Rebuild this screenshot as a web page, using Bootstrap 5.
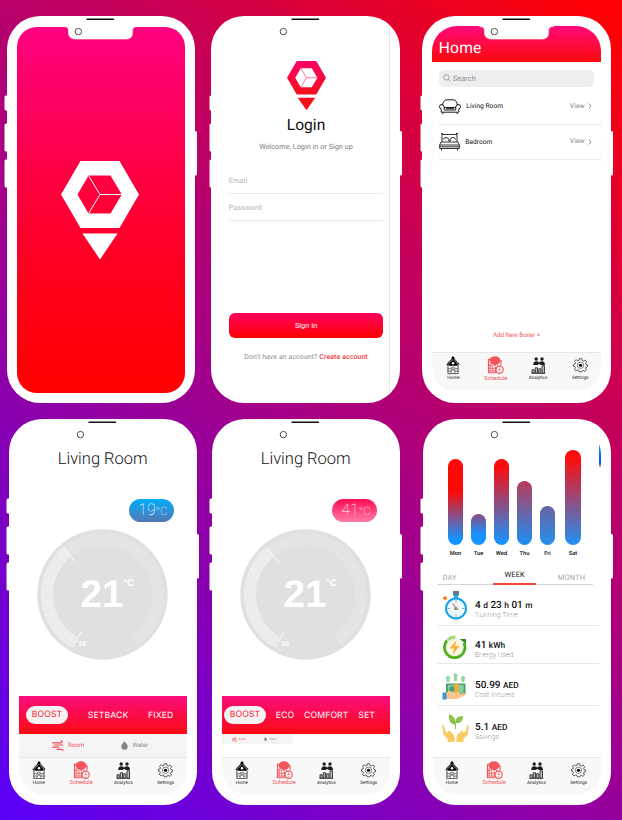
<!DOCTYPE html>
<html lang="en">
<head>
<meta charset="utf-8">
<meta name="viewport" content="width=device-width, initial-scale=1">
<title>Smart Boiler</title>
<link rel="stylesheet" href="https://cdn.jsdelivr.net/npm/bootstrap@5.3.0/dist/css/bootstrap.min.css">
<style>
html,body{height:820px;overflow:hidden}
body{width:622px;font-family:Roboto,"Liberation Sans",sans-serif;color:#222;line-height:1;text-rendering:geometricPrecision;
  background:linear-gradient(40deg,#5800f8 0%,#98009a 40%,#c80055 70%,#fd0003 98%);white-space:nowrap}
svg{display:block;flex:none}
.defs{width:0;height:0}
/* device */
.line-one{padding:16px 0 0 6.800px;height:418.5px}
.line-two{padding-left:8.5px}
.line-one .phone:nth-child(2){margin-left:16px}
.line-two .phone:nth-child(2){margin-left:14.5px}
.phone:nth-child(3){margin-left:22.5px}
.phone{width:188.5px;height:386.5px;border-radius:33px;background:#fff;padding:10px;flex:none}
.device{left:-2.5px;top:0;width:194px;height:387px;pointer-events:none}
.screen{width:168.5px;height:366px;border-radius:25px;overflow:hidden;box-shadow:inset 0 0 0 1px #fffdf2}
.splash{background:linear-gradient(#ff0080,#ff0040 42%,#ff001c 70%,#f00);height:366px;margin-top:1px;box-shadow:none;border-radius:20px}
.splash svg{margin-top:133.5px;margin-left:-3px}
/* login */
.login{padding:35px 6.5px 0 7.5px}
.login-edge{box-shadow:inset -1px 0 0 #e9e9ec;border-radius:25px 0 0 25px}
.login h1{font-size:15.6px;font-weight:400;margin:5.500px 0 0;line-height:18px;color:#111}
.login .welcome{font-size:7.3px;line-height:10px;margin-top:7.500px;color:#7f7f84}
.login .fields{margin-top:15px}
.field{border-bottom:1px solid #e9e9ea;font-size:7.3px;color:#b4b4b8;height:27px;line-height:28px;letter-spacing:.1px}
.sign{height:25.5px;border-radius:6px;background:linear-gradient(#ff0060,#f00);color:#fff;font-size:7.4px;line-height:25px;padding:0;border:0;margin-top:92px}
.account{font-size:6.9px;margin-top:16px;color:#8c8c90;letter-spacing:.12px}
.account b{font-weight:500;color:#ee3a3a}
/* home */
.top-title{height:36px;background:linear-gradient(#ff0a7c,#fb0a0a);color:#fff;font-size:15.6px;padding:13px 0 0 6.5px;line-height:19px;letter-spacing:.2px}
.search{margin:8px 7px 0 6.5px;height:16.5px;border-radius:5px;background:#eeeef0;color:#929296;font-size:7.5px;padding-left:4px;gap:2px}
.room{margin-left:6.5px;height:35.2px;border-bottom:1px solid #ececee;font-size:6.7px;color:#111;padding-right:8.5px}
.room.first{height:38.3px;padding-top:3px}
.room .name{margin-left:5.500px}
.room .view{color:#85858a;font-size:6.8px;letter-spacing:.1px;gap:3.500px}
.room .view svg{margin-top:-.5px}
.boiler{font-size:6.2px;color:#ee5558;margin-bottom:13.500px}
.home-tabs{padding-bottom:2px}
.tabs-bar{height:38px;background:#f8f8f9;border-top:1px solid #e7e7ea;flex:none;width:168.5px}
.tabs-bar>div{width:42.3px;padding-top:3px;font-size:4.6px;color:#222;text-align:center;flex:none}
.tabs-bar svg{margin:0 auto 2.800px}
.tabs-bar .on{color:#f0565a;font-size:5.7px}
.tabs-bar .on svg{margin-bottom:2px}
.line-two .tabs-bar>div{position:relative;left:-.8px}
#usage .tabs-bar>div{left:-1.8px}
/* thermostat */
.room-title{font-size:16.5px;font-weight:300;margin:21px 0 0;line-height:20px;color:#111}
.target{width:45px;height:22.5px;border-radius:12px;margin:29.5px 13px 0 auto;font-weight:100;font-size:16px;line-height:22.500px;color:#fff;text-align:center;padding-left:3px}
.target small{font-size:11.5px}
.cool{background:linear-gradient(#02acfb,#5478b4)}
.hot{background:linear-gradient(#ff0a55,#ff7ba6)}
.dial{margin:7.3px auto 0}
.modes{height:38.700px;background:linear-gradient(#fb0d7c,#fb0b12);color:#fff;font-family:Inter,sans-serif;font-size:8.7px;letter-spacing:.1px;flex:none;padding:0 13.500px 0 7.500px}
.modes.four{padding:0 15px 0 2.500px}
.modes span:not(.mode-on){padding-top:2px}
.mode-on{width:42px;height:17.5px;border-radius:9px;background:#f4f2f3;color:#f22a38;line-height:19px;text-align:center}
.source{height:22.3px;background:#f4f4f5;font-size:6.2px;color:#8e8e92;flex:none;padding:0 20px 0 15px}
.source .on{color:#ee5558}
.source.tiny{height:10px;width:71.5px;font-size:2.8px;padding:0 7px 0 1px}
.source.tiny span{gap:2px}
.tiny-slot{height:22.3px;flex:none}
/* usage */
.chart{padding-left:15px;height:129.500px;flex:none}
.bar-col{width:16px;margin-right:7px;font-size:5.8px;font-weight:500;color:#111}
.bar-col:last-child{margin-left:2.500px}
.bar-col i{display:block;width:15.7px;border-radius:8px;margin-bottom:7px}
.period{width:156.5px;margin:10px 0 0 4px;height:17px;border-bottom:1px solid #d5d5d8;font-size:7.5px;color:#a8a8ac;letter-spacing:.1px;flex:none}
.period span{width:43px;padding-top:5.5px}
.period span:first-child{padding-left:6px}
.period .on{color:#111;height:17px;padding-top:3px;border-bottom:2px solid #fa4437}
.stat{margin:0 2px 0 4px;border-bottom:1px solid #e8e8ea;font-size:10px;font-weight:500;color:#111;flex:none}
.stat svg{margin:2px 3.500px 0 2px}
.stat .figure{padding-top:11px}
.stat small{font-size:8.4px;font-weight:500}
.stat em{display:block;font-style:normal;font-weight:100;font-size:7.1px;color:#111;line-height:8px}
.peek{right:0;top:13px;width:2px;height:25px;background:linear-gradient(#1c9bff,#0050ff 85%,#e8c060)}
</style>
<script src="https://cdn.jsdelivr.net/npm/bootstrap@5.3.0/dist/js/bootstrap.bundle.min.js"></script>
</head>
<body>
<svg class="defs position-absolute" aria-hidden="true">
  <defs>
    <linearGradient id="brand" x1="0" y1="0" x2="0" y2="1"><stop offset="0" stop-color="#ff0066"/><stop offset="1" stop-color="#f4101c"/></linearGradient>
    <symbol id="device" viewBox="-2.5 0 194 387">
      <path fill="#fff" d="M57 10.5q5 0 5 4v2q0 6.500 7 6.500h51q6 0 6-6.500v-2q0-4 5-4V8H57z"/>
      <path fill="none" stroke="#fffbe9" stroke-width=".7" d="M57 10.500q5 0 5 4v2q0 6.500 7 6.500h51q6 0 6-6.500v-2q0-4 5-4"/>
      <path stroke="#111" stroke-width="1.4" stroke-linecap="round" d="M80.500 3.200h26.500"/>
      <circle cx="71.900" cy="15.600" r="3.200" fill="#fff" stroke="#222" stroke-width=".8"/>
      <path fill="#fffef8" d="M1 79.500h-1.500q-1.500 0-1.500 1.500v12q0 1.500 1.500 1.500H1zM1 107.500h-1.500q-1.500 0-1.500 1.500v25q0 1.500 1.500 1.500H1zM1 143.500h-1.500q-1.500 0-1.500 1.500v25q0 1.500 1.500 1.500H1zM188 115h1q1.500 0 1.500 1.500v41.500q0 1.500-1.500 1.500h-1z"/>
    </symbol>
    <symbol id="logo" viewBox="0 0 78 99">
      <path fill-rule="evenodd" d="M0 33.500 19.500 0h39L78 33.500 58.500 67h-39zM16.500 33.500l11 19h22l11.300-19-11.300-19h-22z"/>
      <path d="M21.500 72.500h35L39 98.500z"/>
      <path d="M27.500 14.500 39 33.500h22M39 33.500l-11.500 19" fill="none" stroke="currentColor"/>
    </symbol>
    <symbol id="i-home" viewBox="0 0 14 19">
      <path d="M.8 9 7 2.200 13.200 9" fill="none" stroke="#1d1d1f" stroke-width="1.700" stroke-dasharray="1.300 .35"/>
      <circle cx="7" cy="2" r="1.500"/><path d="M2.500 8.500 7 3.500l4.500 5V10h-9z"/>
      <path d="M1.800 9.300v8.900h10.400V9.300" fill="none" stroke="#1d1d1f" stroke-width=".8"/>
      <circle cx="7" cy="7.500" r="1.300" fill="#fff"/>
      <path d="M5 18v-5.500l2-1.300 2 1.300V18M5 12l4 4M9 12l-4 4M2 13h2.200M9.800 13H12M2 15.500h2.200M9.800 15.500H12" fill="none" stroke="#1d1d1f" stroke-width=".6"/>
    </symbol>
    <symbol id="i-schedule" viewBox="0 0 17 18">
      <path d="M3 3H1.500v13.500h8M13 4.500h1V9" fill="none" stroke="#f0565a" stroke-width="1.200"/>
      <path d="M3.200 7v8M5.800 9.500V15M2 9h4M2 12h7M2 14.800h7M8.500 10.500v5M10.500 8.500v2" stroke="#f0565a" stroke-width=".9"/>
      <ellipse cx="8" cy="4.300" rx="5.500" ry="4.200" fill="#f0565a"/><path d="m6 7.500 2 2.500 2.500-2.500z" fill="#f0565a"/>
      <circle cx="12.600" cy="13.500" r="3.600" fill="#fff" stroke="#f0565a" stroke-width="1.200"/>
      <path d="M12.600 11.300v2.300h1.800M10.800 13.600h.8M12.600 15v.8" fill="none" stroke="#f0565a" stroke-width=".8"/>
    </symbol>
    <symbol id="i-analytics" viewBox="0 0 15 18" fill="#1d1d1f">
      <circle cx="5.200" cy="2.800" r="1.700"/><circle cx="11" cy="2.800" r="1.700"/>
      <path d="M2.200 8.800q0-3.800 3-3.800t2.900 2q0-2 2.900-2t3 3.800H10l-1.800-1-1.700 1z"/>
      <path d="M1 13.500h2.200V17H1zM4.300 11.500h2.200V17H4.300zM7.700 12.500h2.200V17H7.700zM11 9.500h2.500V17H11z" fill="#bbb" stroke="#1d1d1f" stroke-width=".8"/>
      <path d="M.3 17.100h14" stroke="#1d1d1f" stroke-width=".6"/>
    </symbol>
    <symbol id="i-settings" viewBox="0 0 16 16">
      <path fill="none" stroke="#2a2a2c" stroke-width=".8" d="M6.700 1h2.600l.4 2 1.300.6 1.800-1.200 1.800 1.800L13.400 6l.5 1.300 1.600.3v1.900l-1.700.5-.5 1.200 1.100 1.700-1.700 1.700-1.800-1.100-1.200.5L9.300 15H6.700l-.4-1.500-1.300-.5-1.800 1.100-1.800-1.700 1.200-1.800L2.100 9.400.5 9V7l1.700-.4.500-1.200L1.500 3.800l1.800-1.700 1.800 1.200L6.300 3z"/>
      <circle cx="8" cy="8" r="3.400" fill="none" stroke="#2a2a2c" stroke-width=".6"/><circle cx="8" cy="8" r="1.700" fill="#000"/>
    </symbol>
    <symbol id="i-wind" viewBox="0 0 12 11">
      <path fill="none" stroke="#ee4c50" stroke-width="1.200" stroke-linecap="round" d="M.6 2.800h8.300q1.200 0 1.200-1T9 .8M2.200 5h8.300M.6 7.200h6M5 9.400h4.500q1.500 0 1.500.9"/>
    </symbol>
    <symbol id="i-drop" viewBox="0 0 7 9"><path fill="#838386" d="M3.500.3q3.200 3.600 3.200 5.200a3.100 3.100 0 0 1-6.400 0Q.3 3.900 3.500.3z"/></symbol>
    <symbol id="dial" viewBox="-65.500 -65.500 131 131">
      <circle r="65.200" fill="#e0e0e0"/>
      <path d="M-29 47.500A55.500 55.500 0 1 1 32 45.500" fill="none" stroke="#e9e9e9" stroke-width="12" stroke-dasharray=".8 1"/>
      <path d="M-29 47.500A55.500 55.500 0 0 1-35-43" fill="none" stroke="#f4f4f4" stroke-width="12" stroke-dasharray="1 .8"/>
      <path d="m-38.500-46.500 11.500 14M-30 52.500l8.500-15" stroke="#fff" stroke-width=".9"/>
      <text x="-22" y="12.300" font-family="Liberation Sans,sans-serif" font-weight="700" font-size="38.500" fill="#fff">21</text>
      <text x="20.800" y="-8.300" font-family="Liberation Sans,sans-serif" font-weight="700" font-size="9.500" fill="#fff">°C</text>
      <text x="-24.300" y="51" font-family="Liberation Sans,sans-serif" font-weight="700" font-size="6.800" fill="#fff">10</text>
    </symbol>
  </defs>
</svg>

<div class="line-one d-flex">
  <!-- Splash -->
  <section class="phone position-relative">
    <div class="screen splash d-flex justify-content-center">
      <svg width="78" height="99" fill="#fff" color="#fff"><use href="#logo"/></svg>
    </div>
    <svg class="device position-absolute"><use href="#device"/></svg>
  </section>

  <!-- Login -->
  <section class="phone position-relative">
    <div class="screen login login-edge text-center">
      <svg class="mx-auto" width="39" height="49.500" viewBox="0 0 78 99" fill="url(#brand)" color="#ff5580">
        <path fill-rule="evenodd" d="M0 33.500 19.500 0h39L78 33.500 58.500 67h-39zM16.500 33.500l11 19h22l11.300-19-11.300-19h-22z"/>
        <path fill="#f9101c" d="M21.500 73.500h35L39 98.500z"/>
        <path d="M27.500 14.500 39 33.500h22M39 33.500l-11.500 19" fill="none" stroke="currentColor" stroke-width="1.600"/>
      </svg>
      <h1>Login</h1>
      <div class="welcome">Welcome, Login in or Sign up</div>
      <div class="text-start fields">
        <div class="field">Email</div>
        <div class="field">Password</div>
      </div>
      <button class="btn sign w-100 d-block">Sign In</button>
      <div class="account">Don't have an account? <b>Create account</b></div>
    </div>
    <svg class="device position-absolute"><use href="#device"/></svg>
  </section>

  <!-- Rooms -->
  <section class="phone position-relative">
    <div class="screen d-flex flex-column">
      <div class="top-title">Home</div>
      <div class="search d-flex align-items-center">
        <svg width="8" height="8" viewBox="0 0 8 8" fill="none" stroke="#8a8a8e" stroke-width=".8"><circle cx="3.400" cy="3.400" r="2.700"/><path d="m5.400 5.400 2 2"/></svg>Search
      </div>
      <div class="room first d-flex align-items-center">
        <svg width="22" height="16" viewBox="0 0 22 16" fill="none" stroke="#1c1c1e" stroke-width="1"><path d="M3.500 6.500Q4 1 8 .8h6q4 .2 4.500 5.700M3.500 5.500Q.5 5 .5 7.800q0 1.700 1.700 2v3.400h17.600V9.800q1.700-.3 1.700-2 0-2.800-3-2.300-1.700.5-1.700 3H5.200q0-2.500-1.700-3zM5.200 8.500V11h11.600V8.500M7 9.700h8M3.800 13.500v1.700M18.200 13.500v1.700"/></svg>
        <span class="name me-auto">Living Room</span>
        <span class="view d-flex align-items-center">View <svg width="4" height="6" viewBox="0 0 4 6" fill="none" stroke="#77777b" stroke-width=".8"><path d="m.7.500 2.300 2.500L.7 5.500"/></svg></span>
      </div>
      <div class="room d-flex align-items-center">
        <svg width="21" height="18" viewBox="0 0 21 18" fill="none" stroke="#1c1c1e" stroke-width=".9"><path d="M3 9V1.500h15V9M2 .5h2M17 .5h2M4.500 6.500q0-2 2.500-2t2.800 2V8h1.400V6.500q.3-2 2.800-2t2.500 2M2 9h17l1.300 3v3.500H.7V12zM.7 12h19.600M.7 13.800h19.600M2.500 15.500v2M18.500 15.500v2"/></svg>
        <span class="name me-auto">Bedroom</span>
        <span class="view d-flex align-items-center">View <svg width="4" height="6" viewBox="0 0 4 6" fill="none" stroke="#77777b" stroke-width=".8"><path d="m.7.500 2.300 2.500L.7 5.500"/></svg></span>
      </div>
      <div class="boiler mt-auto text-center">Add New Boiler +</div>
      <div class="home-tabs" data-tabs></div>
    </div>
    <svg class="device position-absolute"><use href="#device"/></svg>
  </section>
</div>

<div class="line-two d-flex">
  <!-- Thermostat, cooling -->
  <section class="phone position-relative">
    <div class="screen d-flex flex-column">
      <h2 class="room-title text-center">Living Room</h2>
      <div class="target cool">19<small>°C</small></div>
      <svg class="dial" width="131" height="131"><use href="#dial"/></svg>
      <div class="modes d-flex align-items-center mt-auto justify-content-between"><span class="mode-on">BOOST</span><span>SETBACK</span><span>FIXED</span></div>
      <div class="source d-flex align-items-center justify-content-around">
        <span class="on d-flex align-items-center gap-1"><svg width="12" height="11"><use href="#i-wind"/></svg>Room</span>
        <span class="d-flex align-items-center gap-1"><svg width="7" height="9"><use href="#i-drop"/></svg>Water</span>
      </div>
      <div data-tabs></div>
    </div>
    <svg class="device position-absolute"><use href="#device"/></svg>
  </section>

  <!-- Thermostat, heating -->
  <section class="phone position-relative">
    <div class="screen d-flex flex-column">
      <h2 class="room-title text-center">Living Room</h2>
      <div class="target hot">41<small>°C</small></div>
      <svg class="dial" width="131" height="131"><use href="#dial"/></svg>
      <div class="modes four d-flex align-items-center mt-auto justify-content-between"><span class="mode-on">BOOST</span><span>ECO</span><span>COMFORT</span><span>SET</span></div>
      <div class="tiny-slot">
        <div class="source tiny d-flex align-items-center justify-content-around">
          <span class="on d-flex align-items-center"><svg width="5" height="5"><use href="#i-wind"/></svg>Room</span>
          <span class="d-flex align-items-center"><svg width="3" height="4"><use href="#i-drop"/></svg>Water</span>
        </div>
      </div>
      <div data-tabs></div>
    </div>
    <svg class="device position-absolute"><use href="#device"/></svg>
  </section>

  <!-- Usage -->
  <section class="phone position-relative">
    <div class="screen d-flex flex-column position-relative" id="usage">
      <div class="chart d-flex align-items-end" id="chart"></div>
      <div class="period d-flex justify-content-between text-center"><span class="text-start">DAY</span><span class="on">WEEK</span><span>MONTH</span></div>
    </div>
    <svg class="device position-absolute"><use href="#device"/></svg>
  </section>
</div>

<template id="tabs">
  <div class="tabs-bar d-flex">
    <div><svg width="14" height="18.500"><use href="#i-home"/></svg>Home</div>
    <div class="on"><svg width="17" height="18.500"><use href="#i-schedule"/></svg>Schedule</div>
    <div><svg width="15" height="18.500"><use href="#i-analytics"/></svg>Analytics</div>
    <div><svg width="15" height="18.500"><use href="#i-settings"/></svg>Settings</div>
  </div>
</template>

<template id="stats">
  <div class="stat d-flex align-items-center" style="height:40.500px">
    <svg width="33" height="33" viewBox="0 0 33 33"><path fill="#5d7e92" d="M14 2h6v4.500h-6z"/><path fill="#27a9e8" d="M15 6h4v4h-4z"/><path fill="#fb7d18" d="m6 7 2.500 2L6 11.500 3.500 9z"/><circle cx="17" cy="19.500" r="10" fill="#edf7fb" stroke="#18a4ea" stroke-width="2"/><path stroke="#8aaabc" d="M17 11v2.500M17 25.500V28M8.500 19.500H11M23 19.500h2.500"/><path stroke="#d94444" d="m17 19.500-3-5"/><circle cx="17" cy="19.500" r="1.600" fill="#5a7b8c"/><path stroke="#e9a23b" d="m17 19.500 3 1"/></svg>
    <div class="figure">4 <small>d</small> 23 <small>h</small> 01 <small>m</small><em>Running Time</em></div>
  </div>
  <div class="stat d-flex align-items-center" style="height:38.700px">
    <svg width="33" height="33" viewBox="0 0 33 33"><circle cx="15.500" cy="18.500" r="8" fill="#fbfae9" stroke="#e3e1c6" stroke-width=".7"/><path d="M8 11.500A10.300 10.300 0 1 0 25 14" fill="none" stroke="#4fae20" stroke-width="2.800"/><path d="M8.500 11q3-3 8-3" fill="none" stroke="#a8dc7b" stroke-width="2.800"/><path fill="#2f8f22" d="M20.500 10h6.500v5z"/><path fill="#fbb63a" d="m17.500 11-7 8.500h4.500l-1.500 6.500 7-9h-4.500z"/></svg>
    <div class="figure">41 <small>kWh</small><em>Energy Used</em></div>
  </div>
  <div class="stat d-flex align-items-center" style="height:41.500px">
    <svg width="33" height="33" viewBox="0 0 33 33"><path fill="#8fd4a2" d="m9 6.500 3 3h-1.500V13h-3V9.500H6zM16.500 4l3 3H18v5h-3V7h-1.500zM24 6.500l3 3h-1.500V13h-3V9.500H21z"/><path fill="#4e9d75" d="M7 14.500h19.500V26H7z"/><path fill="#88cfa0" d="M9 16h15.500v8.500H9z"/><circle cx="13" cy="20" r="2.700" fill="#4e9d75"/><path fill="#efad31" d="M15.500 14.500h4V26h-4z"/><path fill="#ffc48e" d="M7 24q3-3 7-.5h6q2 1 0 2.500h-3l9-2q1.500 1-.5 2.500L18 30H7z"/><path fill="#3f94d8" d="M3.500 23.500H7.500v7H3.500z"/></svg>
    <div class="figure">50.99 <small>AED</small><em>Cost Incured</em></div>
  </div>
  <div class="stat d-flex align-items-center border-0" style="height:42px">
    <svg width="33" height="33" viewBox="0 0 33 33"><path fill="#8bc34a" d="M16.500 14q-8-1.500-6.500-11 7 2 6.500 11zM16.500 11q-.5-6 7.500-6 0 8-7.500 7zM16 11h1v7h-1z"/><path fill="#f9cb64" d="M3 14l2 .5 1.500 6 2.500 1 .5-2.500 5 4.500q1.500 2 1 7.500H8.500v-3.500L4.500 24zM30 14l-2 .5-1.500 6-2.500 1-.5-2.500-5 4.500q-1.500 2-1 7.500h7v-3.500l4-3.500z"/></svg>
    <div class="figure">5.1 <small>AED</small><em>Savings</em></div>
  </div>
  <div class="mt-auto" data-tabs></div>
  <div class="peek position-absolute"></div>
</template>

<script>
const bars = [
  ['Mon', 86, '#ff0808 38%,#1593ff 93%'], ['Tue', 31.5, '#8a4a7c,#1593ff 65%'], ['Wed', 86, '#ff0a0a 8%,#1593ff 98%'],
  ['Thu', 64, '#b83a5a,#1b90f5'], ['Fri', 39, '#6a62a0,#2590ee'], ['Sat', 95, '#ff0c0c 8%,#2191f5']
];
document.getElementById('chart').innerHTML = bars.map(([day, h, stops]) =>
  `<div class="bar-col text-center"><i style="height:${h}px;background:linear-gradient(${stops})"></i>${day}</div>`).join('');
document.getElementById('usage').append(document.getElementById('stats').content.cloneNode(true));
document.querySelectorAll('[data-tabs]').forEach(slot => slot.append(document.getElementById('tabs').content.cloneNode(true)));
</script>
</body>
</html>
